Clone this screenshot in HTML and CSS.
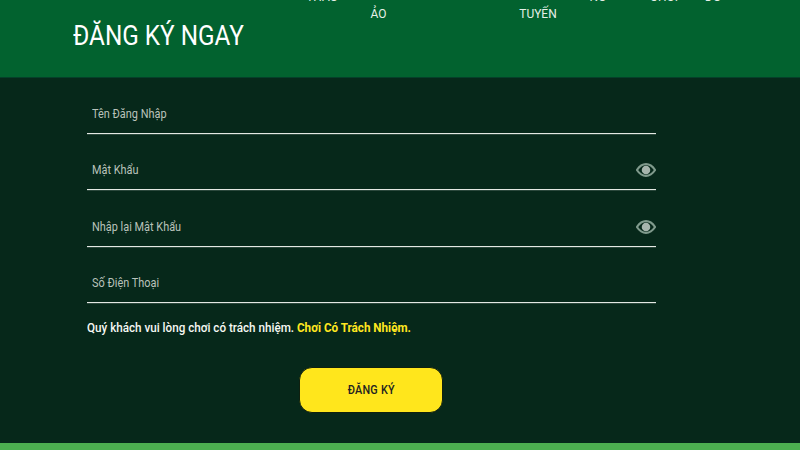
FILE: index.html
```html
<!DOCTYPE html>
<html lang="vi">
<head>
<meta charset="utf-8">
<title>Đăng Ký Ngay</title>
<link rel="stylesheet" href="styles.css">
</head>
<body>
<header class="header">
  <h1 class="title">ĐĂNG KÝ NGAY</h1>
  <nav class="nav">
    <a class="nav-item w1">THAO</a>
    <a class="nav-item w2">THỂ<br>ẢO</a>
    <a class="nav-item w3">TRỰC<br>TUYẾN</a>
    <a class="nav-item w4">NỔ</a>
    <a class="nav-item w5">CHƠI</a>
    <a class="nav-item w6">ĐỐ</a>
  </nav>
</header>
<main class="main">
  <form class="form">
    <div class="field"><span class="label">Tên Đăng Nhập</span></div>
    <div class="field"><span class="label">Mật Khẩu</span>
      <svg class="eye" viewBox="0 0 22 16"><path class="eye-outline" d="M1 8C4 3.500 7.500 1.500 11 1.500S18 3.500 21 8C18 12.500 14.500 14.500 11 14.500S4 12.500 1 8Z"/><circle class="eye-pupil" cx="11" cy="8" r="4.700"/></svg>
    </div>
    <div class="field"><span class="label">Nhập lại Mật Khẩu</span>
      <svg class="eye" viewBox="0 0 22 16"><path class="eye-outline" d="M1 8C4 3.500 7.500 1.500 11 1.500S18 3.500 21 8C18 12.500 14.500 14.500 11 14.500S4 12.500 1 8Z"/><circle class="eye-pupil" cx="11" cy="8" r="4.700"/></svg>
    </div>
    <div class="field"><span class="label">Số Điện Thoại</span></div>
    <p class="note">Quý khách vui lòng chơi có trách nhiệm. <a class="note-link">Chơi Có Trách Nhiệm.</a></p>
    <div class="actions"><button class="submit" type="button"><span class="submit-text">ĐĂNG KÝ</span></button></div>
  </form>
</main>
<footer class="footer"></footer>
</body>
</html>
```

FILE: styles.css
```css
* { box-sizing: border-box; }
html, body { margin: 0; height: 450px; overflow: hidden; }
body {
  display: flex;
  flex-direction: column;
  background: #06281a;
  font-family: Roboto, "Liberation Sans", sans-serif;
}
.header {
  height: 78px;
  flex: none;
  display: flex;
  align-items: flex-start;
  background: #02622f;
  color: #fff;
  overflow: hidden;
  border-bottom: 1px solid #05402a;
}
.title {
  margin: 20px 0 0 73px;
  width: 210px;
  flex: none;
  font-size: 27px;
  line-height: 32px;
  font-weight: 400;
  white-space: nowrap;
  transform: scaleX(0.9);
  transform-origin: left center;
}
.nav {
  display: flex;
  margin-top: -12px;
  font-size: 13px;
  line-height: 17px;
  color: #e6f0e8;
}
.nav-item { display: block; text-align: center; flex: none; transform: scaleX(0.92); }
.w1 { width: 56px; margin-left: 11px; }
.w2 { width: 57px; margin-top: -6px; line-height: 21px; }
.w3 { width: 80px; margin: -6px 0 0 90.500px; line-height: 21px; }
.w4 { width: 40px; }
.w5 { width: 40px; margin-left: 26.500px; }
.w6 { width: 30px; margin-left: 14px; }
.main { flex: 1; padding-left: 87px; }
.form { width: 569px; }
.field {
  height: 56.200px;
  display: flex;
  align-items: flex-end;
  justify-content: space-between;
  padding: 0 0 12px 4.500px;
  border-bottom: 1px solid #e3e8e3;
  box-shadow: 0 1px 0 rgba(255, 255, 255, 0.15);
}
.label {
  font-size: 13px;
  line-height: 15px;
  color: #b9c2bb;
  transform: scaleX(0.84);
  transform-origin: left center;
}
.eye { width: 20px; height: 16px; flex: none; margin-bottom: -1px; }
.eye-outline { fill: #06281a; stroke: #7f9a8c; stroke-width: 2.400; }
.eye-pupil { fill: #a6b5ad; }
.note {
  margin: 16px 0 0;
  font-size: 13px;
  line-height: 18px;
  font-weight: 500;
  color: #f6f8f3;
  white-space: nowrap;
  transform: scaleX(0.897);
  transform-origin: left center;
}
.note-link { color: #ffe720; font-weight: 700; }
.actions { margin-top: 30.500px; display: flex; padding-left: 212px; }
.submit {
  width: 144px;
  height: 46px;
  border: 1px solid #10200f;
  border-radius: 13px;
  background: #ffe61c;
  color: #222;
  font: 500 12px Roboto, "Liberation Sans", sans-serif;
  letter-spacing: 0.3px;
}
.submit-text { display: inline-block; transform: scaleX(0.9); }
.footer { height: 7px; flex: none; background: #4caf50; }
```
